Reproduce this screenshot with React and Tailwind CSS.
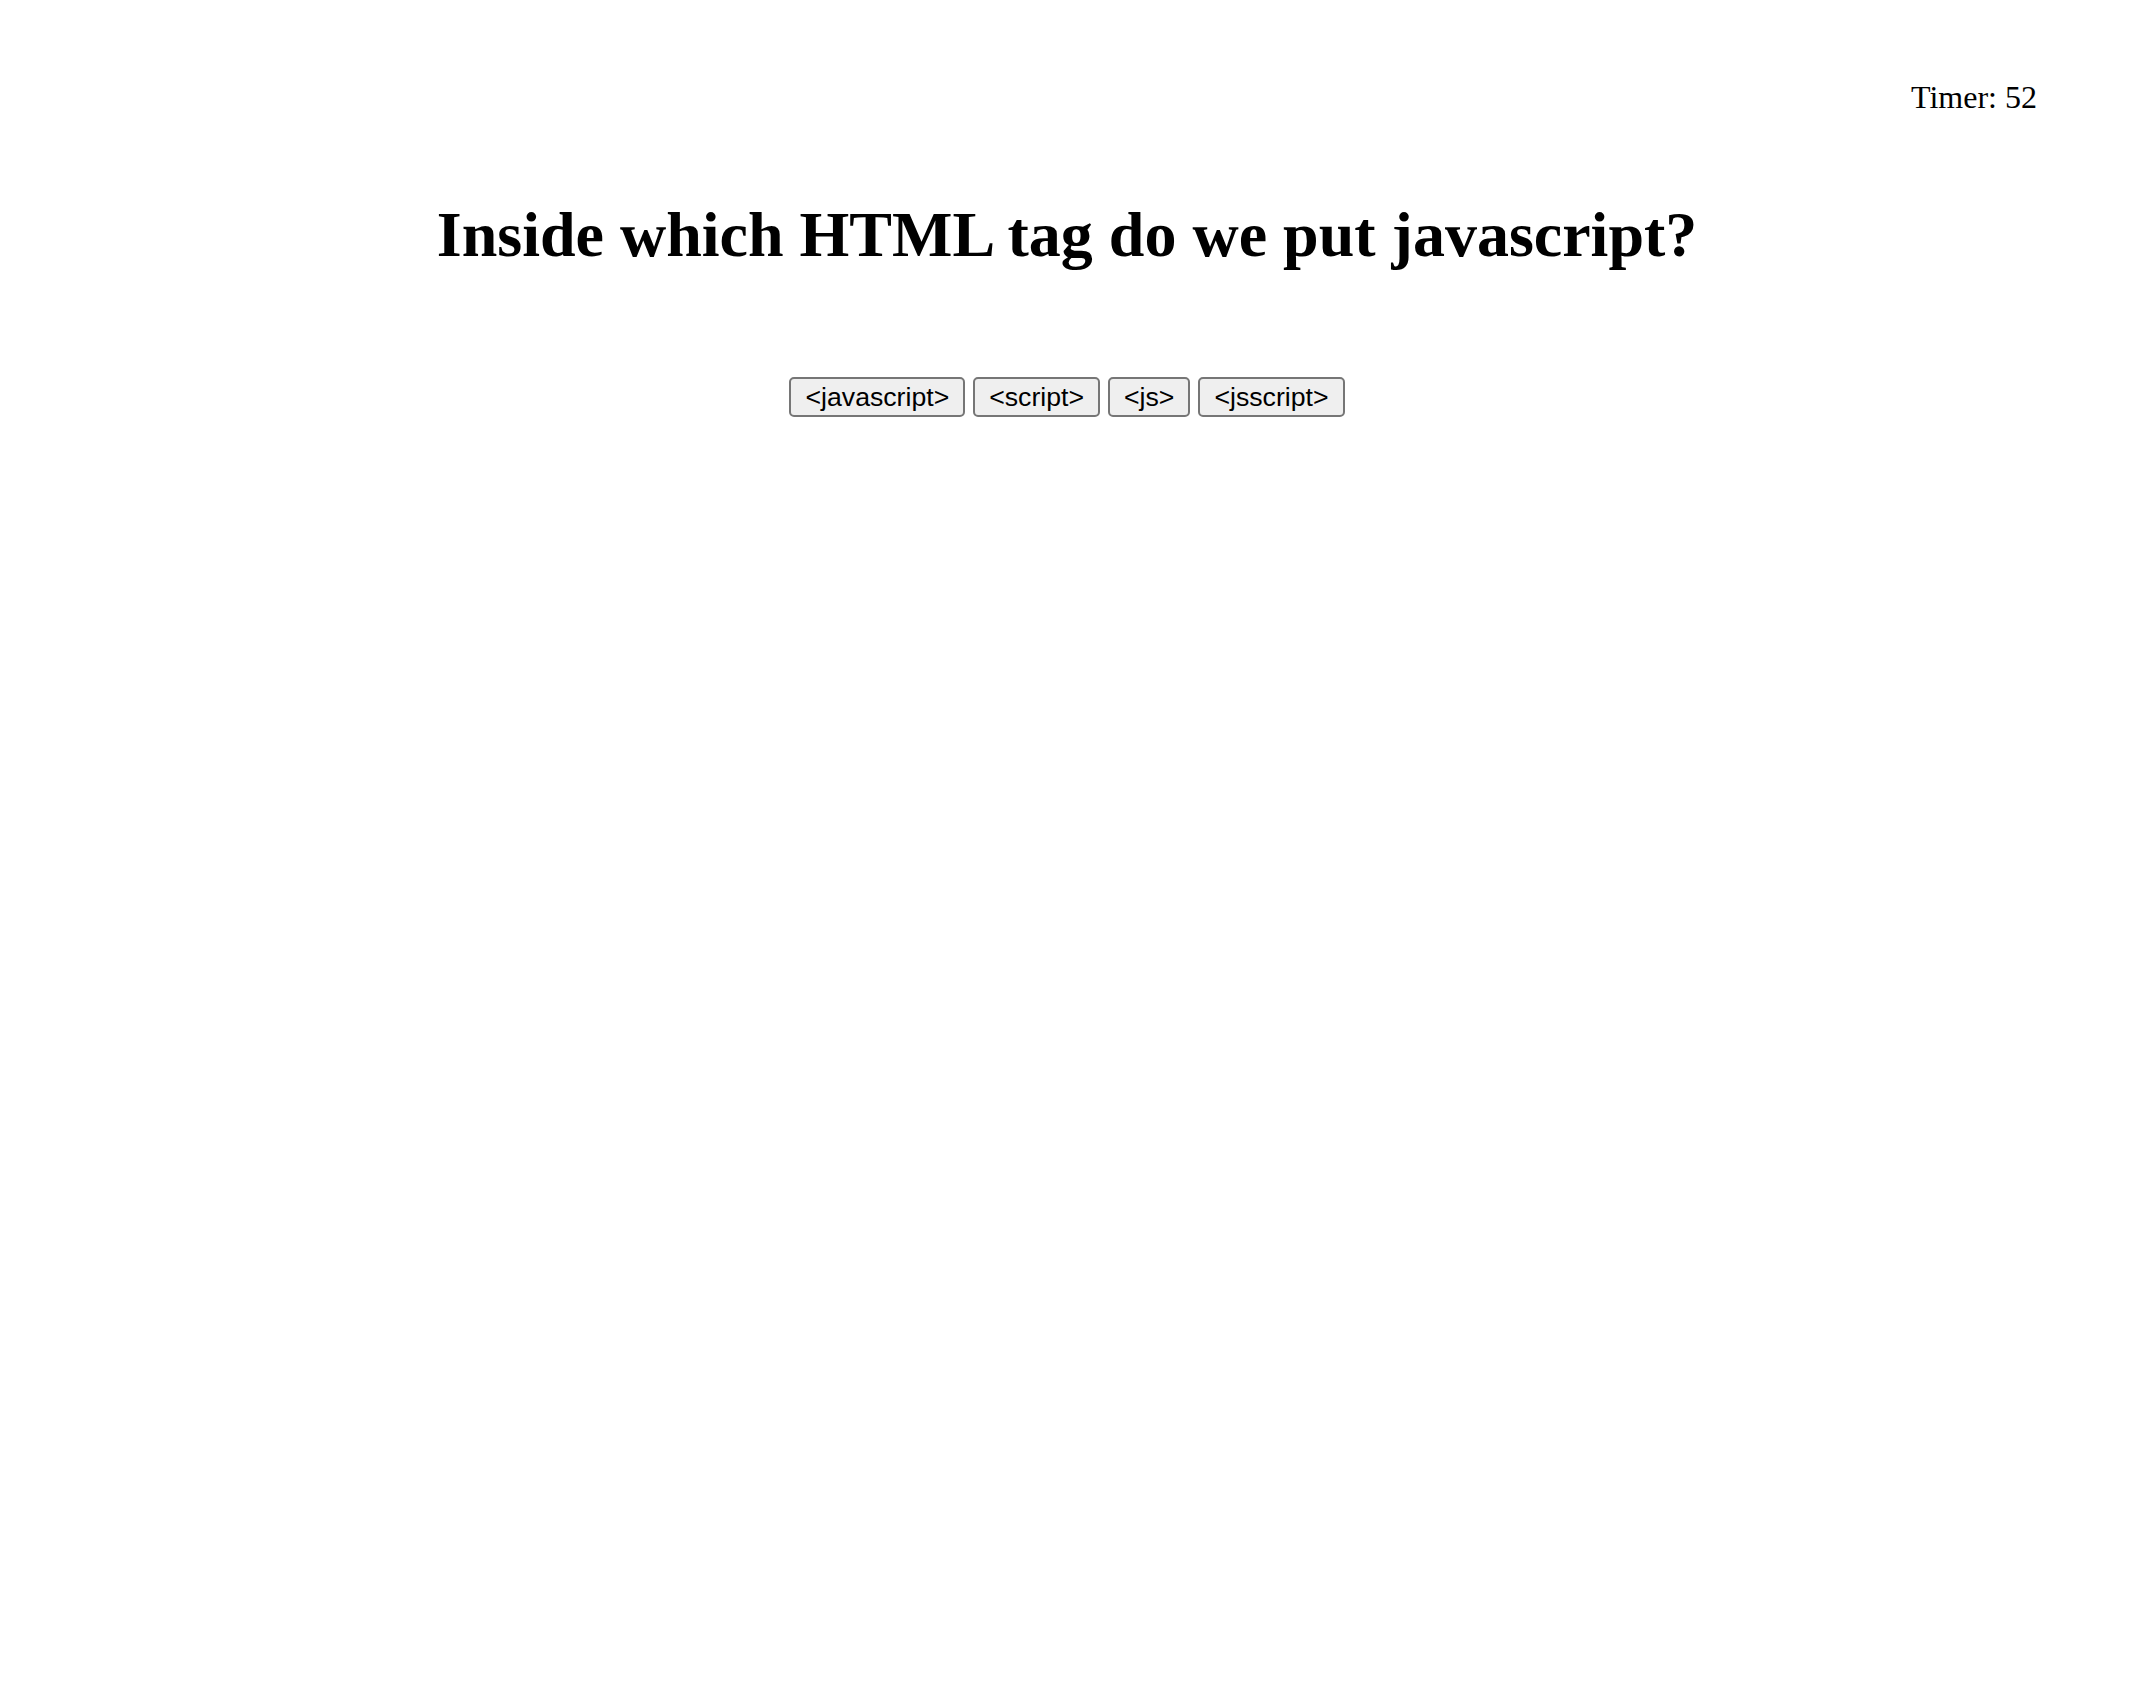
export default function App() {
  const options = ["<javascript>", "<script>", "<js>", "<jsscript>"];
  return (
    <div className="min-h-[1700px] bg-white text-black" style={{ fontFamily: '"Liberation Serif", "Times New Roman", serif' }}>
      <div className="pt-[79px] pr-[97px] text-right text-[32px] leading-[37px]">Timer: 52</div>
      <h1 className="mt-[82px] text-center text-[64px] font-bold leading-[74px]">
        Inside which HTML tag do we put javascript?
      </h1>
      <div className="mt-[105px] flex justify-center gap-[8px]">
        {options.map((o) => (
          <button
            key={o}
            className="h-[40px] px-[14px] rounded-[5px] border-2 border-[#767676] bg-[#efefef] text-[26.67px] leading-none text-black"
            style={{ fontFamily: '"Liberation Sans", Arial, sans-serif' }}
          >
            {o}
          </button>
        ))}
      </div>
    </div>
  );
}
